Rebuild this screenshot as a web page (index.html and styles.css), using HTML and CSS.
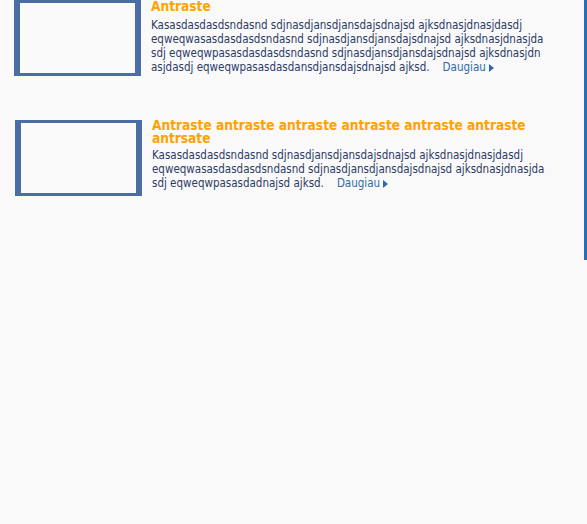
FILE: index.html
```html
<!DOCTYPE html>
<html>
<head>
<meta charset="utf-8">
<link rel="stylesheet" href="styles.css">
</head>
<body>
<div class="page">
  <div class="news">
    <div class="item item-first">
      <div class="thumb"></div>
      <div class="body">
        <div class="title">Antraste</div>
        <div class="text">Kasasdasdasdsndasnd sdjnasdjansdjansdajsdnajsd ajksdnasjdnasjdasdj<br>eqweqwasasdasdasdsndasnd sdjnasdjansdjansdajsdnajsd ajksdnasjdnasjda<br>sdj eqweqwpasasdasdasdsndasnd sdjnasdjansdjansdajsdnajsd ajksdnasjdn<br>asjdasdj eqweqwpasasdasdansdjansdajsdnajsd ajksd.<a class="more" href="#">Daugiau<span class="arrow"></span></a></div>
      </div>
    </div>
    <div class="item item-second">
      <div class="thumb"></div>
      <div class="body">
        <div class="title">Antraste antraste antraste antraste antraste antraste<br>antrsate</div>
        <div class="text">Kasasdasdasdsndasnd sdjnasdjansdjansdajsdnajsd ajksdnasjdnasjdasdj<br>eqweqwasasdasdasdsndasnd sdjnasdjansdjansdajsdnajsd ajksdnasjdnasjda<br>sdj eqweqwpasasdadnajsd ajksd.<a class="more" href="#">Daugiau<span class="arrow"></span></a></div>
      </div>
    </div>
  </div>
</div>
</body>
</html>
```

FILE: styles.css
```css
html, body {
  margin: 0;
  padding: 0;
  background: #f9f9f9;
}

body {
  font-family: "DejaVu Sans Condensed", "DejaVu Sans", sans-serif;
  width: 587px;
  height: 524px;
  overflow: hidden;
}

.page {
  width: 584px;
  height: 260px;
  border-right: 3px solid #2b6cb4;
}

.news {
  display: flex;
  flex-direction: column;
  gap: 44px;
}

.item {
  display: flex;
  align-items: flex-start;
  gap: 10px;
}

.item-first {
  padding-left: 14px;
}

.item-second {
  padding-left: 15px;
}

.thumb {
  flex: none;
  width: 115px;
  height: 70px;
  border-style: solid;
  border-color: #4a6ea3;
  border-width: 3px 6px;
  background: #fafafa;
}

.body {
  flex: 1;
  min-width: 0;
}

.title {
  font-size: 13.6px;
  font-weight: bold;
  line-height: 13px;
  color: #ffa200;
  margin-bottom: 5px;
}

.item-second .title {
  margin-top: -1px;
  margin-bottom: 3px;
}

.text {
  font-size: 11.5px;
  line-height: 14px;
  color: #2d3b66;
  white-space: nowrap;
}

.more {
  color: #2f6aae;
  text-decoration: none;
  margin-left: 13px;
}

.arrow {
  display: inline-block;
  width: 0;
  height: 0;
  margin-left: 3px;
  border-left: 5px solid #2f6aae;
  border-top: 4px solid transparent;
  border-bottom: 4px solid transparent;
  vertical-align: -1px;
}
```
